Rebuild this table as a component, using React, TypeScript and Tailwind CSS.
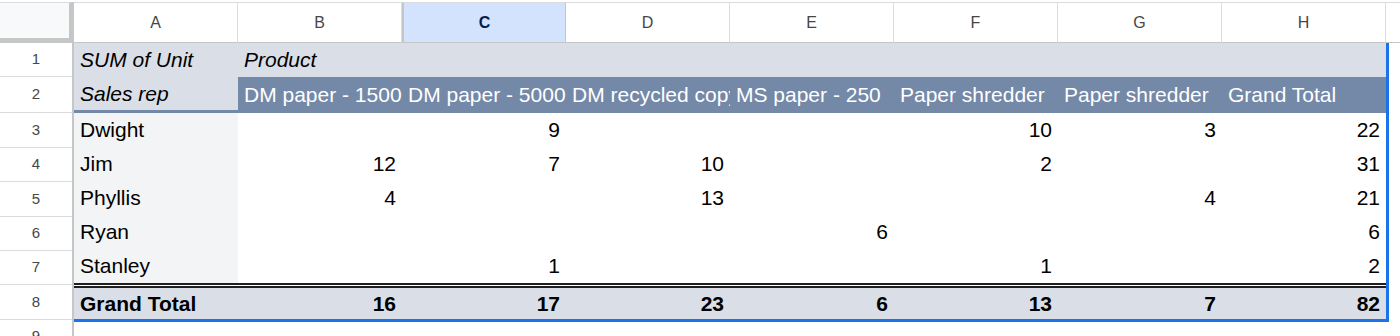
import React from 'react';

type Units = (number | null)[];

const COLUMNS = ['A', 'B', 'C', 'D', 'E', 'F', 'G', 'H'];
const SELECTED_COLUMN = 'C';

const PRODUCTS = [
  'DM paper - 1500 sheets',
  'DM paper - 5000 sheets',
  'DM recycled copy paper',
  'MS paper - 250',
  'Paper shredder',
  'Paper shredder',
  'Grand Total',
];

const REPS: { name: string; units: Units }[] = [
  { name: 'Dwight', units: [null, 9, null, null, 10, 3, 22] },
  { name: 'Jim', units: [12, 7, 10, null, 2, null, 31] },
  { name: 'Phyllis', units: [4, null, 13, null, null, 4, 21] },
  { name: 'Ryan', units: [null, null, null, 6, null, null, 6] },
  { name: 'Stanley', units: [null, 1, null, null, 1, null, 2] },
];

const TOTALS = [16, 17, 23, 6, 13, 7, 82];

// row number -> height of that row in the sheet
const ROW_HEIGHTS: [number, string][] = [
  [1, 'h-[34px]'],
  [2, 'h-[36px]'],
  [3, 'h-[35px]'],
  [4, 'h-[34px]'],
  [5, 'h-[35px]'],
  [6, 'h-[34px]'],
  [7, 'h-[34px]'],
  [8, 'h-[35px]'],
  [9, 'h-[34px]'],
];

const cell = 'w-[164px] shrink-0 px-[6px] flex items-center overflow-hidden whitespace-nowrap';

export default function App() {
  return (
    <div className="w-[1400px] h-[336px] overflow-hidden bg-white text-black font-['Liberation_Sans',Arial,sans-serif]">
      {/* column letters */}
      <div className="flex h-[43px] pt-[2px]">
        <div className="w-[74px] shrink-0 h-full bg-[#f8f9fa] border-t border-t-[#dadce0] border-r-[5px] border-b-[5px] border-r-[#c4c7c5] border-b-[#c4c7c5]" />
        {COLUMNS.map((c) => (
          <div
            key={c}
            className={
              c === SELECTED_COLUMN
                ? 'w-[164px] shrink-0 h-full flex items-center justify-center bg-[#d3e3fd] border-t border-b border-r border-t-[#dadce0] border-b-[#c4c7c5] border-r-[#c4c7c5] border-l-2 border-l-[#c4c7c5] text-[16px] font-bold text-[#041e49]'
                : 'w-[164px] shrink-0 h-full flex items-center justify-center border-t border-b border-r border-t-[#dadce0] border-b-[#c4c7c5] border-r-[#dadce0] text-[16px] text-[#444746]'
            }
          >
            {c}
          </div>
        ))}
        <div className="flex-1 h-full border-t border-b border-t-[#dadce0] border-b-[#c4c7c5]" />
      </div>

      <div className="flex">
        {/* row numbers */}
        <div className="w-[74px] shrink-0 border-r-2 border-[#c4c7c5]">
          {ROW_HEIGHTS.map(([n, h]) => (
            <div key={n} className={`${h} flex items-center justify-center border-b border-[#dadce0] text-[15px] text-[#444746]`}>
              {n}
            </div>
          ))}
        </div>

        {/* pivot table, selected range */}
        <div className="w-[1315px] shrink-0 self-start border-r-[3px] border-b-[3px] border-[#1a73e8] text-[21px]">
          <div className="flex h-[34px] bg-[#dadfe7] italic">
            <div className={cell}>SUM of Unit</div>
            <div className={cell}>Product</div>
          </div>

          <div className="flex h-[36px]">
            <div className={`${cell} bg-[#dadfe7] border-b-[3px] border-[#7488a8] italic`}>Sales rep</div>
            {PRODUCTS.map((p, i) => (
              <div key={i} className={`${cell} bg-[#7488a8] text-white`}>
                {p}
              </div>
            ))}
          </div>

          {REPS.map((r) => (
            <div key={r.name} className="flex h-[34px]">
              <div className={`${cell} bg-[#f3f4f6]`}>{r.name}</div>
              {r.units.map((u, i) => (
                <div key={i} className={`${cell} justify-end`}>
                  {u ?? ''}
                </div>
              ))}
            </div>
          ))}

          <div className="flex h-[36px] bg-[#dadfe7] bg-clip-padding border-t-[5px] border-double border-[#1f1f1f] font-bold">
            <div className={cell}>Grand Total</div>
            {TOTALS.map((t, i) => (
              <div key={i} className={`${cell} justify-end`}>
                {t}
              </div>
            ))}
          </div>
        </div>
      </div>
    </div>
  );
}
